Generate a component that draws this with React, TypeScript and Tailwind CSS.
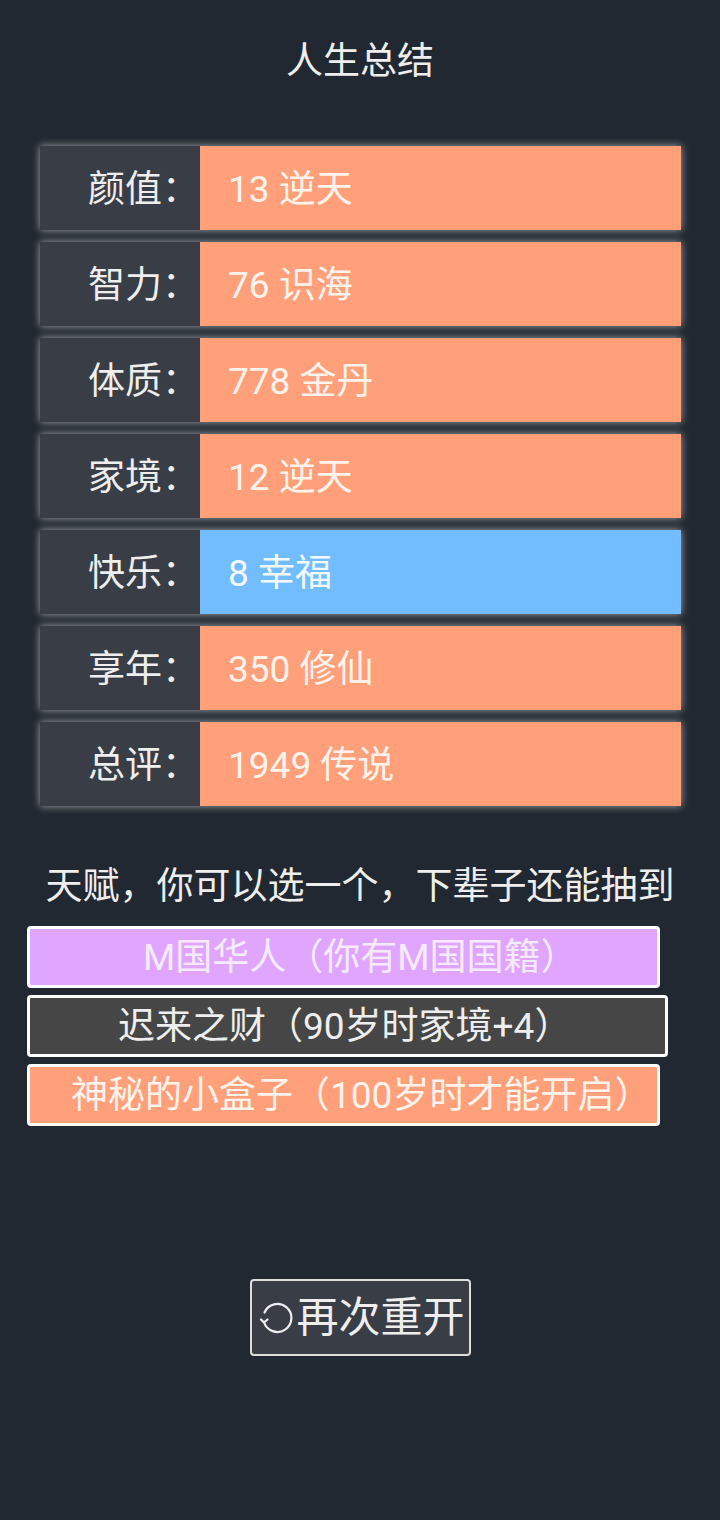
import React from 'react';

type Stat = { label: string; value: string; tone: 'orange' | 'blue' };

const stats: Stat[] = [
  { label: '颜值：', value: '13 逆天', tone: 'orange' },
  { label: '智力：', value: '76 识海', tone: 'orange' },
  { label: '体质：', value: '778 金丹', tone: 'orange' },
  { label: '家境：', value: '12 逆天', tone: 'orange' },
  { label: '快乐：', value: '8 幸福', tone: 'blue' },
  { label: '享年：', value: '350 修仙', tone: 'orange' },
  { label: '总评：', value: '1949 传说', tone: 'orange' },
];

const talents = [
  { text: 'M国华人（你有M国国籍）', box: 'w-[633px] pl-[113px] bg-[#e0a6ff] text-[#f6eaff]' },
  { text: '迟来之财（90岁时家境+4）', box: 'w-[641px] pl-[88px] bg-[#464646] text-[#eeeeee]' },
  { text: '神秘的小盒子（100岁时才能开启）', box: 'w-[633px] pl-[41px] bg-[#ffa07a] text-[#fff3ec]' },
];

function RestartIcon() {
  return (
    <svg width="36" height="36" viewBox="0 0 36 36" fill="none" stroke="#eeeeee" strokeWidth="2.2" strokeLinecap="round" strokeLinejoin="round">
      <path d="M6.5 12.5 A14 14 0 1 1 6 22" />
      <path d="M3 19.5 L6 22.5 L9.5 19.5" />
    </svg>
  );
}

export default function App() {
  return (
    <div className="min-h-[1520px] w-[720px] bg-[#222831] text-[#eeeeee] font-['Roboto','Noto_Sans_CJK_SC',sans-serif]">
      <h1 className="pt-[41px] text-center text-[37px] leading-[42px] font-normal">人生总结</h1>

      <div className="ml-[40px] mt-[63px] flex w-[641px] flex-col gap-[12px]">
        {stats.map((s) => (
          <div key={s.label} className="flex h-[84px] shadow-[0_0_8px_rgba(255,255,255,0.6)]">
            <div className="flex w-[160px] items-center justify-end bg-[#393e46] pr-[1px] pt-[2px] text-[37px] leading-none">
              {s.label}
            </div>
            <div
              className={
                s.tone === 'blue'
                  ? 'flex flex-1 items-center bg-[#72bdff] pl-[28px] pt-[2px] text-[37px] leading-none text-[#f4f8ff]'
                  : 'flex flex-1 items-center bg-[#ffa07a] pl-[28px] pt-[2px] text-[37px] leading-none text-[#fff3ec]'
              }
            >
              {s.value}
            </div>
          </div>
        ))}
      </div>

      <p className="mt-[60px] text-center text-[37px] leading-[42px]">天赋，你可以选一个，下辈子还能抽到</p>

      <div className="ml-[27px] mt-[18px] flex flex-col gap-[7px]">
        {talents.map((t) => (
          <div
            key={t.text}
            className={`flex h-[62px] items-center whitespace-nowrap rounded-[4px] border-[3px] border-white pt-[1px] text-[37px] leading-none ${t.box}`}
          >
            {t.text}
          </div>
        ))}
      </div>

      <div className="mt-[153px] flex justify-center">
        <button
          type="button"
          className="flex h-[77px] w-[221px] items-center gap-[3px] rounded-[4px] border-2 border-[#dddddd] bg-[#393e46] pl-[6px] text-[42px] leading-none text-[#eeeeee]"
        >
          <RestartIcon />
          <span className="whitespace-nowrap">再次重开</span>
        </button>
      </div>
    </div>
  );
}
